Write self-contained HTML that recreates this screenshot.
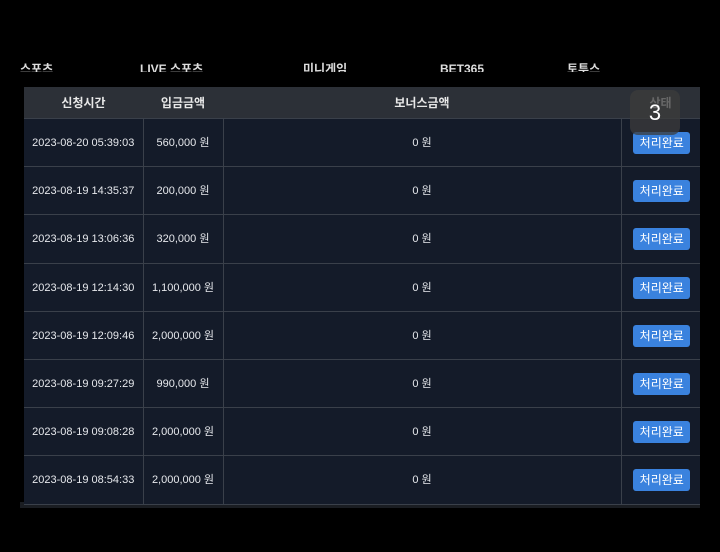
<!DOCTYPE html>
<html><head><meta charset="utf-8"><style>
body{margin:0;width:720px;height:552px;background:#000;position:relative;overflow:hidden;font-family:"Liberation Sans","Noto Sans CJK KR",sans-serif;color:#e6e8ec}
.nav{position:absolute;top:58px;font-size:12px;color:#ddd;font-weight:bold;height:14px;overflow:hidden;line-height:22px}
table{position:absolute;left:24px;top:87px;width:676px;border-collapse:collapse;font-size:11px;table-layout:fixed}
th{background:#2c3037;height:31px;font-weight:bold;font-size:12px;color:#e8e8e8;border:none;padding:0;vertical-align:middle}
td{background:#141b29;height:47px;border:1px solid #3a404a;text-align:center;padding:0;vertical-align:middle;line-height:14px;white-space:nowrap}
tr:nth-child(4) td,tr:nth-child(9) td{height:48px}
td:first-child{border-left:none}
td:last-child{border-right:none}
.b{display:inline-block;background:#3a82de;color:#fff;border-radius:3px;width:57px;height:22px;line-height:22px;font-size:12px;margin-left:2px}
.badge{position:absolute;left:630px;top:90px;width:50px;height:45px;background:rgba(60,60,60,.75);border-radius:8px;color:#fff;font-size:22px;text-align:center;line-height:46px}
.sh{position:absolute;left:20px;top:502px;width:680px;height:6px;background:#1a1d22}
</style></head><body>
<div class="nav" style="left:20px">스포츠</div>
<div class="nav" style="left:140px">LIVE 스포츠</div>
<div class="nav" style="left:303px">미니게임</div>
<div class="nav" style="left:440px">BET365</div>
<div class="nav" style="left:567px">토투스</div>
<div class="sh"></div>
<table>
<colgroup><col style="width:119px"><col style="width:80px"><col style="width:398px"><col style="width:79px"></colgroup>
<tr><th>신청시간</th><th>입금금액</th><th>보너스금액</th><th>상태</th></tr>
<tr><td>2023-08-20 05:39:03</td><td>560,000 원</td><td>0 원</td><td><span class="b">처리완료</span></td></tr>
<tr><td>2023-08-19 14:35:37</td><td>200,000 원</td><td>0 원</td><td><span class="b">처리완료</span></td></tr>
<tr><td>2023-08-19 13:06:36</td><td>320,000 원</td><td>0 원</td><td><span class="b">처리완료</span></td></tr>
<tr><td>2023-08-19 12:14:30</td><td>1,100,000 원</td><td>0 원</td><td><span class="b">처리완료</span></td></tr>
<tr><td>2023-08-19 12:09:46</td><td>2,000,000 원</td><td>0 원</td><td><span class="b">처리완료</span></td></tr>
<tr><td>2023-08-19 09:27:29</td><td>990,000 원</td><td>0 원</td><td><span class="b">처리완료</span></td></tr>
<tr><td>2023-08-19 09:08:28</td><td>2,000,000 원</td><td>0 원</td><td><span class="b">처리완료</span></td></tr>
<tr><td>2023-08-19 08:54:33</td><td>2,000,000 원</td><td>0 원</td><td><span class="b">처리완료</span></td></tr>
</table>
<div class="badge">3</div>
</body></html>
